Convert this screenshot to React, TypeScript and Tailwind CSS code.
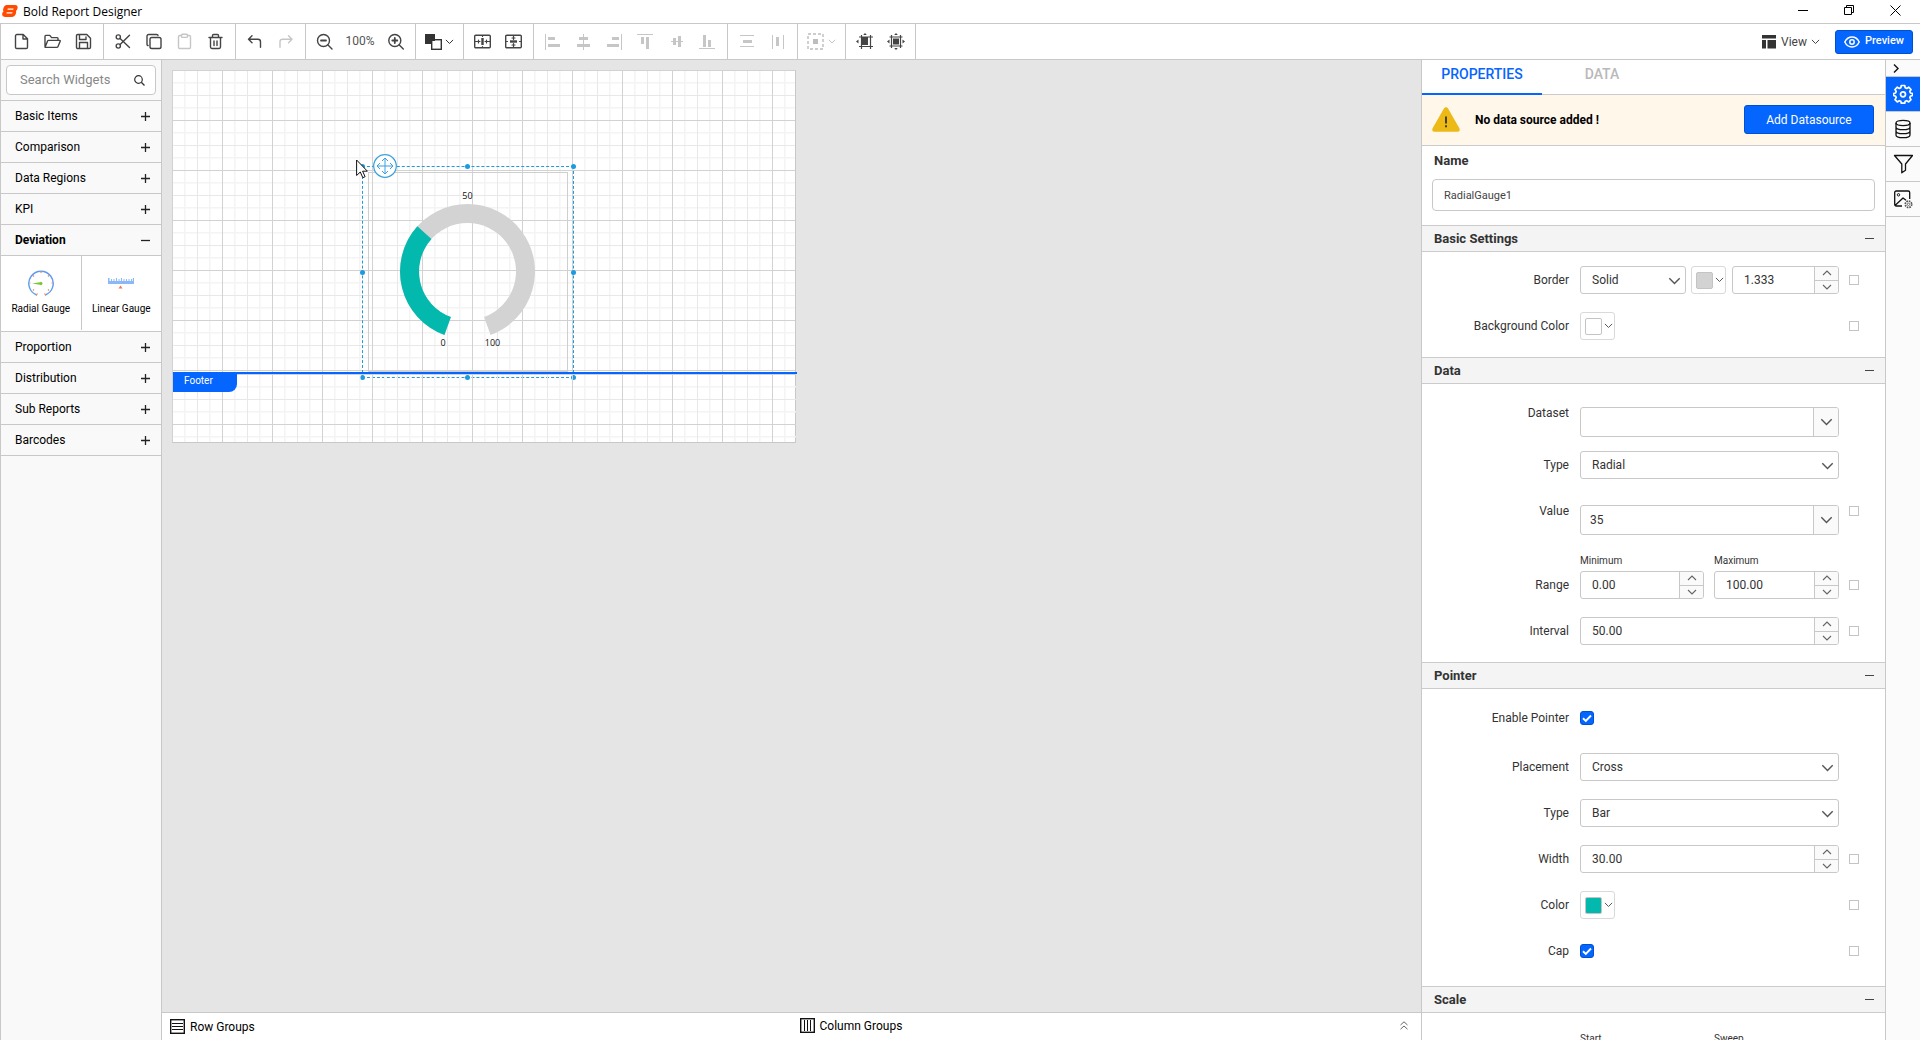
import React, { useId, useState } from 'react';

type IconProps = { children: React.ReactNode; size?: number; className?: string };

function Icon({ children, size = 17, className = '' }: IconProps) {
  return (
    <svg
      width={size}
      height={size}
      viewBox={`0 0 ${size} ${size}`}
      fill="none"
      stroke="currentColor"
      strokeWidth="1.4"
      strokeLinecap="round"
      strokeLinejoin="round"
      className={className}
      aria-hidden="true"
    >
      {children}
    </svg>
  );
}

function Chevron({ up = false, className = 'w-[9px]' }: { up?: boolean; className?: string }) {
  return (
    <svg viewBox="0 0 10 6" fill="none" stroke="currentColor" className={className} aria-hidden="true">
      <path d={up ? 'M1 5l4-4 4 4' : 'M1 1l4 4 4-4'} strokeWidth="1.1" />
    </svg>
  );
}

/* ---------- Toolbar ---------- */

const icons = {
  file: (
    <path d="M3.8 1.5h6.4l4.3 4.3v8.4c0 .8-.6 1.3-1.3 1.3H3.8c-.7 0-1.3-.5-1.3-1.3V2.8c0-.7.6-1.3 1.3-1.3zM10 1.8v4.2h4.3" />
  ),
  open: (
    <path d="M1 13.5V3.2c0-.5.3-.8.8-.8h4l1.8 2.2h5.6c.5 0 .8.3.8.8v2M1 14.2L3.6 8c.2-.4.5-.6.9-.6h11.2c.5 0 .7.4.5.8l-2.3 5.5c-.2.5-.5.7-1 .7H1.6" />
  ),
  save: (
    <path d="M2.8 1.5h9l3.7 3.7v9c0 .8-.5 1.3-1.3 1.3H2.8c-.8 0-1.3-.5-1.3-1.3V2.8c0-.8.5-1.3 1.3-1.3zM4.5 1.8v4.7h6.5V4M4.5 15.2V9.5h8v5.7" />
  ),
  cut: (
    <>
      <circle cx="4.3" cy="4" r="2.1" />
      <circle cx="4.3" cy="13" r="2.1" />
      <path d="M6.1 5.400L15.500 14.600M6.100 11.600L15.500 2.200" />
    </>
  ),
  copy: (
    <>
      <rect x="5" y="4.5" width="11" height="11" rx="1.8" />
      <path d="M3.1 12.5C2.5 12.5 2 12 2 11.3V3.2c0-1 .7-1.7 1.7-1.7h8c.7 0 1.3.5 1.3 1.1" />
    </>
  ),
  paste: (
    <>
      <path d="M5.5 2.5H3.7c-.7 0-1.2.5-1.2 1.2v10.6c0 .7.5 1.2 1.2 1.2h9.6c.7 0 1.2-.5 1.2-1.2V3.7c0-.7-.5-1.2-1.2-1.2h-1.8" />
      <rect x="5.5" y="1.2" width="6" height="3.2" rx="1" />
    </>
  ),
  trash: (
    <path d="M2 4.5h13M3.5 4.5v9.6c0 .8.6 1.4 1.4 1.4h7.2c.8 0 1.4-.6 1.4-1.4V4.5M5.5 4.3V2.6c0-.6.5-1.1 1.1-1.1h3.8c.6 0 1.1.5 1.1 1.1v1.7M7 8v4.5M10 8v4.5" />
  ),
  undo: <path d="M6 2.8L2.5 6.3 6 9.800M2.700 6.300H12c1.600 0 2.500 1 2.500 2.600v5.300" />,
  redo: <path d="M11.5 2.8L15 6.3l-3.5 3.5M14.8 6.3H5.5C3.9 6.3 3 7.3 3 8.9v5.3" />,
  zoomOut: (
    <>
      <circle cx="7.5" cy="7.5" r="6" />
      <path d="M12 12l4 4" />
      <path d="M5 7.5h5" strokeWidth="1.8" />
    </>
  ),
  zoomIn: (
    <>
      <circle cx="7.800" cy="7.5" r="6" />
      <path d="M12.300 12l4 4" />
      <path d="M5.300 7.5h5M7.800 5v5" strokeWidth="1.8" />
    </>
  ),
  fitWidth: (
    <>
      <rect x="0.7" y="2.2" width="15.6" height="12.6" rx="1" />
      <path d="M8.5 5v7" strokeWidth="2.4" strokeLinecap="butt" />
      <path d="M8.5 2.5v1M8.5 13.5v1M1 8.5h5M11 8.5h5M4.5 7v3M12.5 7v3" strokeWidth="1.2" />
    </>
  ),
  fitHeight: (
    <>
      <rect x="0.7" y="2.2" width="15.6" height="12.6" rx="1" />
      <path d="M5 8.5h7" strokeWidth="2.4" strokeLinecap="butt" />
      <path d="M8.5 2.5v4M8.5 10.5v4M7 5h3M7 12h3M1.5 8.5h1M14.5 8.5h1" strokeWidth="1.2" />
    </>
  ),
  alignLeft: (
    <g fill="currentColor" stroke="none">
      <rect x="1" y="1" width="1" height="16" />
      <rect x="4" y="4" width="7" height="3" />
      <rect x="4" y="11" width="12" height="3" />
    </g>
  ),
  alignCenter: (
    <g fill="currentColor" stroke="none">
      <rect x="8" y="1" width="1" height="16" />
      <rect x="4" y="4" width="9" height="3" />
      <rect x="2" y="11" width="13" height="3" />
    </g>
  ),
  alignRight: (
    <g fill="currentColor" stroke="none">
      <rect x="15" y="1" width="1" height="16" />
      <rect x="6" y="4" width="7" height="3" />
      <rect x="1" y="11" width="12" height="3" />
    </g>
  ),
  alignTop: (
    <g fill="currentColor" stroke="none">
      <rect x="0" y="1" width="16" height="1" />
      <rect x="4" y="4" width="3" height="7" />
      <rect x="9" y="4" width="3" height="12" />
    </g>
  ),
  alignMiddle: (
    <g fill="currentColor" stroke="none">
      <rect x="3" y="8" width="12" height="1" />
      <rect x="5" y="5" width="3" height="7" />
      <rect x="10" y="3" width="3" height="11" />
    </g>
  ),
  alignBottom: (
    <g fill="currentColor" stroke="none">
      <rect x="0" y="15" width="16" height="1" />
      <rect x="4" y="2" width="3" height="12" />
      <rect x="9" y="7" width="3" height="7" />
    </g>
  ),
  spaceVertical: (
    <g fill="currentColor" stroke="none">
      <rect x="2" y="2" width="14" height="1" />
      <rect x="5" y="7" width="9" height="3" />
      <rect x="2" y="13" width="14" height="1" />
    </g>
  ),
  spaceHorizontal: (
    <g fill="currentColor" stroke="none">
      <rect x="3" y="2" width="1" height="14" />
      <rect x="7" y="4" width="3" height="9" />
      <rect x="14" y="2" width="1" height="14" />
    </g>
  ),
  crop: (
    <>
      <path d="M5.500 2v14M14.500 2v14M3 4h14M3 13.500h14" strokeWidth="1.200" strokeLinecap="butt" />
      <rect x="5" y="4" width="7" height="8" fill="currentColor" stroke="none" />
      <path d="M0 8.500l2.500-2v4zM9 0l1.800 2H7.200z" fill="currentColor" stroke="none" />
    </>
  ),
  cropAll: (
    <>
      <path d="M4.500 2v13M13.500 2v13M2.500 4h13M2.500 13h13" strokeWidth="1.200" strokeLinecap="butt" />
      <rect x="6" y="5.500" width="6" height="6" fill="currentColor" stroke="none" />
      <path
        d="M0 8.500l2.500-2v4zM18 8.500l-2.500-2v4zM9 0l1.800 2H7.200zM9 17l1.800-2H7.200z"
        fill="currentColor"
        stroke="none"
      />
    </>
  ),
};

type IconName = keyof typeof icons;

function Tool({ icon, label, disabled = false }: { icon: IconName; label: string; disabled?: boolean }) {
  return (
    <button
      type="button"
      aria-label={label}
      disabled={disabled}
      className="flex h-[35px] w-[31px] items-center justify-center text-[#444] disabled:text-[#c6c6c6]"
    >
      <Icon className="overflow-visible">{icons[icon]}</Icon>
    </button>
  );
}

function Group({ children, first = false }: { children: React.ReactNode; first?: boolean }) {
  return (
    <div className={`flex items-center border-r border-[#c8c8c8] pr-1 ${first ? 'pl-[5px]' : 'pl-[3px]'}`}>
      {children}
    </div>
  );
}

function Toolbar() {
  return (
    <div className="flex h-[37px] shrink-0 border border-r-0 border-[#c8c8c8] bg-white">
      <Group first>
        <Tool icon="file" label="New" />
        <Tool icon="open" label="Open" />
        <Tool icon="save" label="Save" />
      </Group>
      <Group>
        <Tool icon="cut" label="Cut" />
        <Tool icon="copy" label="Copy" />
        <Tool icon="paste" label="Paste" disabled />
        <Tool icon="trash" label="Delete" />
      </Group>
      <Group>
        <Tool icon="undo" label="Undo" />
        <Tool icon="redo" label="Redo" disabled />
      </Group>
      <Group>
        <Tool icon="zoomOut" label="Zoom out" />
        <span className="w-10 pb-[2px] text-center text-[12px] text-[#555]">100%</span>
        <Tool icon="zoomIn" label="Zoom in" />
      </Group>
      <Group>
        <button type="button" aria-label="Order" className="flex h-[35px] w-10 items-center justify-center text-[#333]">
          <Icon className="shrink-0">
            <rect x="0" y="1" width="10" height="10" fill="currentColor" stroke="none" />
            <rect x="6.7" y="6.7" width="9.6" height="9.6" fill="#fff" strokeLinejoin="miter" />
            <rect x="0" y="1" width="10" height="7" fill="currentColor" stroke="none" />
          </Icon>
          <Chevron className="ml-[3px] w-[9px]" />
        </button>
      </Group>
      <Group>
        <Tool icon="fitWidth" label="Fit width" />
        <Tool icon="fitHeight" label="Fit height" />
      </Group>
      <Group>
        <Tool icon="alignLeft" label="Align left" disabled />
        <Tool icon="alignCenter" label="Align center" disabled />
        <Tool icon="alignRight" label="Align right" disabled />
        <Tool icon="alignTop" label="Align top" disabled />
        <Tool icon="alignMiddle" label="Align middle" disabled />
        <Tool icon="alignBottom" label="Align bottom" disabled />
      </Group>
      <Group>
        <Tool icon="spaceVertical" label="Space vertically" disabled />
        <Tool icon="spaceHorizontal" label="Space horizontally" disabled />
      </Group>
      <Group>
        <button
          type="button"
          disabled
          aria-label="Grid alignment"
          className="flex h-[35px] w-10 items-center justify-center text-[#bdbdbd]"
        >
          <Icon className="shrink-0">
            <rect x="1" y="1" width="15" height="15" strokeDasharray="3 2" strokeLinecap="butt" />
            <rect x="6" y="6" width="5" height="5" fill="currentColor" stroke="none" />
          </Icon>
          <Chevron className="ml-1 w-[8px]" />
        </button>
      </Group>
      <Group>
        <Tool icon="crop" label="Center in parent" />
        <Tool icon="cropAll" label="Fit to parent" />
      </Group>
      <div className="ml-auto flex items-center pr-[7px]">
        <button type="button" className="flex items-center text-[12px] text-[#444]">
          <svg width="14" height="14" viewBox="0 0 14 14" fill="#333" className="mr-[5px]" aria-hidden="true">
            <path d="M0 0h14v3.500H0zM0 5h4v8.500H0zM5.500 5H14v8.500H5.500z" />
          </svg>
          View
          <Chevron className="ml-1 w-[9px]" />
        </button>
        <button
          type="button"
          className="ml-[15px] flex h-6 w-[78px] items-center justify-center gap-[5px] rounded-[3px] border border-[#0050d0] bg-[#0565ff] text-[11px] font-medium text-white"
        >
          <svg width="16" height="12" viewBox="0 0 16 12" fill="none" stroke="currentColor" aria-hidden="true">
            <path d="M.8 6C2.300 2.900 4.900 1 8 1s5.700 1.900 7.200 5c-1.500 3.100-4.100 5-7.200 5S2.300 9.100.8 6z" strokeWidth="1.5" />
            <circle cx="8" cy="6" r="2.200" strokeWidth="1.5" />
          </svg>
          Preview
        </button>
      </div>
    </div>
  );
}

function TitleBar() {
  return (
    <header className="flex h-[23px] shrink-0 items-start bg-white pl-[2px] pr-[19px]">
      <svg width="16" height="12" viewBox="0 0 16 12" className="mt-[5px]" aria-hidden="true">
        <path
          d="M5 0h8c2 0 3 1.200 2.500 3.200-.3 1.300-.6 1.900-1.500 2.700.3.700.2 1.500-.1 2.600C13.200 10.700 12 12 9.500 12h-6C1.200 12-.1 10.700.2 8.700c.2-1 .5-1.600 1.300-2.300C1 5.700 1 5 1.200 4 1.800 1.300 3 0 5 0z"
          fill="#ff4a00"
        />
        <path d="M5.800 3.500h5.800l-.4 1.300H5.400zM4.800 7.300h5.800l-.4 1.300H4.400z" fill="#fff" />
      </svg>
      <h1 className="ml-[5px] font-['Open_Sans',sans-serif] text-[12px] leading-[23px] text-black">Bold Report Designer</h1>
      <div className="ml-auto flex h-[20px] items-center gap-9 text-black">
        <button type="button" aria-label="Minimize">
          <svg width="10" height="10" viewBox="0 0 10 10" fill="none" stroke="currentColor" aria-hidden="true">
            <path d="M0 5.500h10" />
          </svg>
        </button>
        <button type="button" aria-label="Restore">
          <svg width="10" height="10" viewBox="0 0 10 10" fill="none" stroke="currentColor" aria-hidden="true">
            <path d="M.5 2.500h7v7h-7zM2.500 2V.5h7v7H8" />
          </svg>
        </button>
        <button type="button" aria-label="Close">
          <svg width="11" height="11" viewBox="0 0 11 11" fill="none" stroke="currentColor" aria-hidden="true">
            <path d="M.5.5l10 10M10.500.5l-10 10" />
          </svg>
        </button>
      </div>
    </header>
  );
}

/* ---------- Widget list ---------- */

function Category({ name, open = false }: { name: string; open?: boolean }) {
  return (
    <button
      type="button"
      aria-expanded={open}
      className={`flex h-[31px] w-full items-center justify-between border-b border-[#c8c8c8] pl-[14px] pr-[11px] text-[12px] text-black ${open ? 'font-bold' : ''}`}
    >
      {name}
      <svg width="9" height="9" viewBox="0 0 9 9" fill="none" stroke="#222" aria-hidden="true">
        <path d={open ? 'M0 4.500h9' : 'M0 4.500h9M4.500 0v9'} strokeWidth="1.300" />
      </svg>
    </button>
  );
}

function Sidebar() {
  return (
    <aside className="flex w-[162px] shrink-0 flex-col border-x border-[#c8c8c8] bg-[#f9f9f9]">
      <div className="border-b border-[#c8c8c8] px-[5px] pb-[5px] pt-[5px]">
        <label className="flex h-[30px] items-center rounded-[4px] border border-[#c8c8c8] bg-white pl-[13px] pr-[10px]">
          <input
            type="text"
            aria-label="Search Widgets"
            placeholder="Search Widgets"
            className="min-w-0 flex-1 text-[13px] text-[#333] outline-none placeholder:text-[#888]"
          />
          <svg width="11" height="11" viewBox="0 0 11 11" fill="none" stroke="#333" aria-hidden="true">
            <circle cx="4.500" cy="4.500" r="3.800" strokeWidth="1.200" />
            <path d="M7.300 7.300l3.200 3.200" strokeWidth="1.300" />
          </svg>
        </label>
      </div>
      <Category name="Basic Items" />
      <Category name="Comparison" />
      <Category name="Data Regions" />
      <Category name="KPI" />
      <Category name="Deviation" open />
      <div className="flex border-b border-[#c8c8c8] bg-white">
        <button
          type="button"
          className="mb-px flex h-[74px] flex-1 flex-col items-center border-r border-[#c8c8c8] pt-[14px] text-[10px] text-black"
        >
          <svg width="26" height="26" viewBox="0 0 26 26" fill="none" className="mb-[5px]" aria-hidden="true">
            <path d="M9 25A12.200 12.200 0 1 1 17 25" stroke="#5b9bf3" strokeWidth="1.400" />
            <path
              d="M13 3v-2M5 5.500l1 1M21 5.500l-1 1M2.500 13h-1M25 13h-1.500M5 20.500l1-1M21 20.500l-1-1M8 25.500l1.500-2M18 25.500l-1.500-2"
              stroke="#f08a5d"
              strokeWidth="1.200"
            />
            <path d="M4 13.500l8-1.300a1.600 1.600 0 1 1 0 2.600z" fill="#7dc62f" />
          </svg>
          Radial Gauge
        </button>
        <button type="button" className="flex h-[74px] flex-1 flex-col items-center pt-[14px] text-[10px] text-black">
          <svg width="26" height="26" viewBox="0 0 26 26" className="mb-[5px]" aria-hidden="true">
            <path
              d="M0 8h1.500v3H3V9h1v2h1.500V9h1v2H8V8h1v3h1.500V9h1v2H13V8h1v3h1.500V9h1v2H18V9h1v2h1.500V9h1v2H23V9h1v2h.8V8H26v6H0z"
              fill="#8bb8f7"
            />
            <path d="M12.500 15.500l2 3h-4z" fill="#f0784a" />
          </svg>
          Linear Gauge
        </button>
      </div>
      <Category name="Proportion" />
      <Category name="Distribution" />
      <Category name="Sub Reports" />
      <Category name="Barcodes" />
    </aside>
  );
}

/* ---------- Design surface ---------- */

function Grid({ id }: { id: string }) {
  return (
    <svg className="absolute inset-0 h-full w-full" aria-hidden="true">
      <defs>
        <pattern id={id} width="50" height="50" patternUnits="userSpaceOnUse">
          <path d="M12 0h1.500v50H12zM37 0h1.500v50H37zM0 12h50v1.500H0zM0 37h50v1.500H0z" fill="#f4f4f4" />
          <path d="M25 0h1v50h-1zM0 25h50v1H0z" fill="#e8e8e8" />
          <path d="M0 0h1v50H0zM0 0h50v1H0z" fill="#d2d2d2" />
        </pattern>
      </defs>
      <rect width="100%" height="100%" fill={`url(#${id})`} />
    </svg>
  );
}

function arc(from: number, to: number, outer: number, inner: number) {
  const c = 98.5;
  const p = (r: number, deg: number) => {
    const a = (deg * Math.PI) / 180;
    return `${(c + r * Math.cos(a)).toFixed(2)} ${(c + r * Math.sin(a)).toFixed(2)}`;
  };
  const large = to - from > 180 ? 1 : 0;
  return `M${p(outer, from)}A${outer} ${outer} 0 ${large} 1 ${p(outer, to)}L${p(inner, to)}A${inner} ${inner} 0 ${large} 0 ${p(inner, from)}Z`;
}

function RadialGauge() {
  return (
    <svg width="198" height="198" viewBox="0 0 198 198" aria-label="Radial gauge">
      <path d={arc(110, 430, 67.5, 48.5)} fill="#d3d3d3" />
      <path d={arc(110, 222, 67.5, 48.5)} fill="#03b9ad" />
      <g fontFamily="Open Sans, sans-serif" fontSize="9" fill="#111" textAnchor="middle">
        <text x="98.500" y="26">50</text>
        <text x="74" y="173">0</text>
        <text x="123.500" y="173">100</text>
      </g>
    </svg>
  );
}

function Handle({ className }: { className: string }) {
  return <span className={`absolute h-[5px] w-[5px] rounded-full bg-[#1c9be0] ${className}`} />;
}

function Selection() {
  return (
    <div className="absolute left-[189px] top-[95px] h-[212px] w-[212px] border border-dashed border-[#1c9be0] p-[5px]">
      <div className="h-[200px] border border-[#cfcfcf]">
        <RadialGauge />
      </div>
      <Handle className="-left-[3px] -top-[3px]" />
      <Handle className="-top-[3px] left-[102px]" />
      <Handle className="-right-[3px] -top-[3px]" />
      <Handle className="-left-[3px] top-[103px]" />
      <Handle className="-right-[3px] top-[103px]" />
      <Handle className="-bottom-[3px] -left-[3px]" />
      <Handle className="-bottom-[3px] left-[102px]" />
      <Handle className="-bottom-[3px] -right-[3px]" />
      <svg
        width="24"
        height="24"
        viewBox="0 0 24 24"
        fill="none"
        stroke="#3ba0de"
        className="absolute -top-[13px] left-[10px]"
        aria-hidden="true"
      >
        <circle cx="12" cy="12" r="11.300" fill="#fff" strokeWidth="1.200" />
        <path d="M12 4v16M4 12h16M9 7l3-3 3 3M9 17l3 3 3-3M7 9l-3 3 3 3M17 9l3 3-3 3" />
      </svg>
      <svg width="12" height="20" viewBox="0 0 12 20" className="absolute -left-[7px] -top-[8px]" aria-hidden="true">
        <path d="M.6 1v15.500l3.700-3.500 2.500 5.700 2.300-1-2.500-5.500h4.800z" fill="#fff" stroke="#111" />
      </svg>
    </div>
  );
}

function GroupIcon({ columns = false }: { columns?: boolean }) {
  return (
    <svg width="15" height="15" viewBox="0 0 15 15" fill="none" stroke="#111" aria-hidden="true">
      <rect x=".7" y=".7" width="13.600" height="13.600" strokeWidth="1.400" />
      <path d={columns ? 'M4.500 2v11M7.500 2v11M10.500 2v11' : 'M2 4.500h11M2 7.500h11M2 10.500h11'} />
    </svg>
  );
}

function Designer() {
  return (
    <main className="flex min-w-0 flex-1 flex-col bg-[#e5e5e5]">
      <div className="flex-1 overflow-hidden pl-[10px] pt-[10px]">
        <div className="relative w-[624px] border border-[#c8c8c8] bg-white">
          <section className="relative -ml-px -mt-px h-[302px]">
            <Grid id="body-grid" />
          </section>
          <section className="relative z-10 -mr-[2px] border-t-2 border-[#0565ff]">
            <div className="relative -ml-px mr-px h-[68px]">
              <Grid id="footer-grid" />
              <span className="relative ml-px flex h-[18px] w-[64px] items-center rounded-br-[8px] bg-[#0565ff] pb-[5px] pl-[11px] text-[10px] text-white">
                Footer
              </span>
            </div>
          </section>
          <Selection />
        </div>
      </div>
      <footer className="grid h-7 shrink-0 grid-cols-2 border-t border-[#c8c8c8] bg-white text-[12px] text-black">
        <div className="flex items-center gap-[5px] pl-2">
          <GroupIcon />
          Row Groups
        </div>
        <div className="flex items-center gap-[5px] pb-[2px] pl-2">
          <GroupIcon columns />
          Column Groups
          <button type="button" aria-label="Expand groups" className="ml-auto mr-[13px]">
            <svg width="8" height="9" viewBox="0 0 8 9" fill="none" stroke="#666" aria-hidden="true">
              <path d="M.5 4L4 .8 7.500 4M.5 8.200L4 5l3.500 3.200" />
            </svg>
          </button>
        </div>
      </footer>
    </main>
  );
}

/* ---------- Property panel ---------- */

function Section({ title, className, children }: { title: string; className: string; children: React.ReactNode }) {
  return (
    <section>
      <h2 className="border-y border-[#cbcbcb] bg-[#f4f4f4]">
        <button
          type="button"
          aria-expanded="true"
          className="flex h-[25px] w-full items-center justify-between pl-3 pr-[11px] text-[13px] font-bold text-[#333]"
        >
          {title}
          <span className="h-px w-[9px] bg-[#444]" />
        </button>
      </h2>
      <div className={className}>{children}</div>
    </section>
  );
}

type RowProps = {
  label: string;
  htmlFor?: string;
  advanced?: boolean;
  top?: boolean;
  children: React.ReactNode;
};

function Row({ label, htmlFor, advanced = true, top = false, children }: RowProps) {
  return (
    <div className={`flex ${top ? 'items-start' : 'items-center'}`}>
      <label
        htmlFor={htmlFor}
        className={`mr-[11px] w-[147px] shrink-0 text-right text-[12px] text-[#333] ${top ? 'leading-[12px]' : ''}`}
      >
        {label}
      </label>
      <div className="flex min-h-[28px] min-w-0 flex-1 items-center">{children}</div>
      <div className="ml-[10px] mr-[26px] flex w-[10px] shrink-0">
        {advanced && (
          <button
            type="button"
            aria-label={`${label} expression`}
            className={`h-[10px] w-[10px] border border-[#c4c4c4] bg-white ${top ? 'mt-px' : ''}`}
          />
        )}
      </div>
    </div>
  );
}

function Select({ id, value, className = 'flex-1' }: { id: string; value: string; className?: string }) {
  return (
    <div className={`relative ${className}`}>
      <select
        id={id}
        className="block h-[28px] w-full appearance-none rounded-[3px] border border-[#c8c8c8] bg-white pl-[11px] text-[12px] text-[#333]"
      >
        <option>{value}</option>
      </select>
      <Chevron className="pointer-events-none absolute right-[5px] top-[11px] w-[13px] text-[#555]" />
    </div>
  );
}

function Combo({ id, value }: { id: string; value: string }) {
  return (
    <div className="flex h-[30px] min-w-0 flex-1 overflow-hidden rounded-[3px] border border-[#c8c8c8] bg-white">
      <input id={id} type="text" defaultValue={value} className="min-w-0 flex-1 pl-[9px] text-[12px] text-[#333] outline-none" />
      <button
        type="button"
        aria-label="Open list"
        className="flex w-[25px] items-center justify-center border-l border-[#c8c8c8] bg-[#fafafa] text-[#555]"
      >
        <Chevron className="w-[13px]" />
      </button>
    </div>
  );
}

function Spinner({ id, label, value, className = 'flex-1' }: { id: string; label?: string; value: string; className?: string }) {
  return (
    <div className={`flex h-[28px] min-w-0 overflow-hidden rounded-[3px] border border-[#c8c8c8] bg-white ${className}`}>
      <input
        id={id}
        aria-label={label}
        type="text"
        inputMode="decimal"
        defaultValue={value}
        className="min-w-0 flex-1 pl-[11px] text-[12px] text-[#333] outline-none"
      />
      <div className="flex w-[24px] shrink-0 flex-col border-l border-[#c8c8c8] bg-[#fafafa] text-[#666]">
        <button type="button" aria-label="Increase" className="flex flex-1 items-center justify-center">
          <Chevron up className="w-[10px]" />
        </button>
        <button type="button" aria-label="Decrease" className="flex flex-1 items-center justify-center border-t border-[#c8c8c8]">
          <Chevron className="w-[10px]" />
        </button>
      </div>
    </div>
  );
}

function ColorButton({ label, swatch }: { label: string; swatch: string }) {
  return (
    <button
      type="button"
      aria-label={label}
      className="flex h-[28px] w-[35px] shrink-0 items-center gap-[2px] rounded-[3px] border border-[#d9d9d9] bg-white pl-1 text-[#555]"
    >
      <span className={`h-[17px] w-[17px] rounded-[2px] border border-[#c4c4c4] ${swatch}`} />
      <Chevron className="w-[9px]" />
    </button>
  );
}

function Tick({ id }: { id: string }) {
  const [on, setOn] = useState(true);
  return (
    <span className="relative flex h-[14px] w-[14px]">
      <input
        id={id}
        type="checkbox"
        checked={on}
        onChange={() => setOn(!on)}
        className="h-[14px] w-[14px] appearance-none rounded-[3px] border border-[#0050d0] bg-white checked:bg-[#0565ff]"
      />
      {on && (
        <svg viewBox="0 0 14 14" fill="none" stroke="#fff" className="pointer-events-none absolute inset-0" aria-hidden="true">
          <path d="M3 7.300l2.800 2.700L11 4.500" strokeWidth="1.900" />
        </svg>
      )}
    </span>
  );
}

function Caption({ text, htmlFor, className }: { text: string; htmlFor: string; className: string }) {
  return (
    <label htmlFor={htmlFor} className={`block text-[10px] leading-4 text-[#333] ${className}`}>
      {text}
    </label>
  );
}

function Properties() {
  const uid = useId();
  const id = (name: string) => `${uid}-${name}`;
  return (
    <aside className="w-[465px] shrink-0 overflow-hidden border-x border-[#c8c8c8] bg-white">
      <div role="tablist" className="flex h-[35px] border-b border-[#cbcbcb] text-[14px] font-medium">
        <button
          type="button"
          role="tab"
          aria-selected="true"
          className="h-[35px] w-[120px] border-b-2 border-[#0565ff] pb-[4px] text-[#0565ff]"
        >
          PROPERTIES
        </button>
        <button type="button" role="tab" aria-selected="false" className="h-[35px] w-[120px] pb-[6px] text-[#b9b9b9]">
          DATA
        </button>
      </div>
      <div className="flex h-[51px] items-center border-b border-[#cbcbcb] bg-[#fff7ea] pb-px pl-[10px] pr-[11px]">
        <svg width="28" height="25" viewBox="0 0 28 25" aria-hidden="true">
          <path d="M14 .3c.9 0 1.600.5 2.200 1.500l11.200 19.500c.8 1.600.2 3.400-1.800 3.400H2.400c-2 0-2.600-1.800-1.800-3.400L11.800 1.800C12.400.8 13.100.3 14 .3z" fill="#ecb916" />
          <path d="M14 9.500v7M14 18.200v2" stroke="#222" strokeWidth="1.600" />
        </svg>
        <span className="ml-[15px] text-[12px] font-bold text-black">No data source added !</span>
        <button
          type="button"
          className="ml-auto h-[29px] w-[130px] rounded-[3px] border border-[#0050d0] bg-[#0565ff] text-[12px] text-white"
        >
          Add Datasource
        </button>
      </div>
      <div className="px-[10px] pb-[14px] pt-[5px]">
        <label htmlFor={id('name')} className="ml-[2px] block text-[13px] font-bold leading-5 text-[#333]">
          Name
        </label>
        <input
          id={id('name')}
          type="text"
          defaultValue="RadialGauge1"
          className="mt-2 block h-[32px] w-full rounded-[4px] border border-[#c8c8c8] px-[11px] text-[11px] text-[#444] outline-none"
        />
      </div>

      <Section title="Basic Settings" className="flex flex-col gap-[18px] pb-[17px] pt-[14px]">
        <Row label="Border" htmlFor={id('border')}>
          <Select id={id('border')} value="Solid" className="w-[106px] shrink-0" />
          <div className="ml-[5px] mr-[6px]">
            <ColorButton label="Border color" swatch="bg-[#d3d3d3]" />
          </div>
          <Spinner id={id('border-width')} label="Border width" value="1.333" />
        </Row>
        <Row label="Background Color">
          <ColorButton label="Background color" swatch="bg-white" />
        </Row>
      </Section>

      <Section title="Data" className="pb-[17px] pt-[23px]">
        <Row label="Dataset" htmlFor={id('dataset')} advanced={false} top>
          <Combo id={id('dataset')} value="" />
        </Row>
        <div className="mb-[26px] mt-[14px]">
          <Row label="Type" htmlFor={id('type')} advanced={false}>
            <Select id={id('type')} value="Radial" />
          </Row>
        </div>
        <Row label="Value" htmlFor={id('value')} top>
          <Combo id={id('value')} value="35" />
        </Row>
        <div className="mb-[2px] mt-[18px] flex pl-[158px]">
          <Caption text="Minimum" htmlFor={id('min')} className="w-[134px]" />
          <Caption text="Maximum" htmlFor={id('max')} className="flex-1" />
        </div>
        <div className="flex flex-col gap-[18px]">
          <Row label="Range" htmlFor={id('min')}>
            <Spinner id={id('min')} value="0.00" className="mr-[10px] w-[124px] shrink-0" />
            <Spinner id={id('max')} value="100.00" />
          </Row>
          <Row label="Interval" htmlFor={id('interval')}>
            <Spinner id={id('interval')} value="50.00" />
          </Row>
        </div>
      </Section>

      <Section title="Pointer" className="pb-[21px] pt-[15px]">
        <Row label="Enable Pointer" htmlFor={id('enable')} advanced={false}>
          <Tick id={id('enable')} />
        </Row>
        <div className="mt-[21px] flex flex-col gap-[18px]">
          <Row label="Placement" htmlFor={id('placement')} advanced={false}>
            <Select id={id('placement')} value="Cross" />
          </Row>
          <Row label="Type" htmlFor={id('pointer-type')} advanced={false}>
            <Select id={id('pointer-type')} value="Bar" />
          </Row>
          <Row label="Width" htmlFor={id('width')}>
            <Spinner id={id('width')} value="30.00" />
          </Row>
          <Row label="Color">
            <ColorButton label="Pointer color" swatch="bg-[#03b9ad]" />
          </Row>
          <Row label="Cap" htmlFor={id('cap')}>
            <Tick id={id('cap')} />
          </Row>
        </div>
      </Section>

      <Section title="Scale" className="pt-[18px]">
        <div className="flex pl-[158px]">
          <Caption text="Start" htmlFor={id('start')} className="w-[134px]" />
          <Caption text="Sweep" htmlFor={id('sweep')} className="flex-1" />
        </div>
        <div className="mt-[2px]">
          <Row label="Angle" htmlFor={id('start')}>
            <Spinner id={id('start')} value="110.00" className="mr-[10px] w-[124px] shrink-0" />
            <Spinner id={id('sweep')} value="320.00" />
          </Row>
        </div>
      </Section>
    </aside>
  );
}

function RailButton({ label, active = false, children }: { label: string; active?: boolean; children: React.ReactNode }) {
  return (
    <button
      type="button"
      aria-label={label}
      className={`flex h-[35px] w-full items-center justify-center border-b border-[#c8c8c8] pb-px ${active ? 'bg-[#0565ff] text-white' : 'text-[#111]'}`}
    >
      <svg width="20" height="20" viewBox="0 0 20 20" fill="none" stroke="currentColor" strokeWidth="1.300" strokeLinejoin="round" aria-hidden="true">
        {children}
      </svg>
    </button>
  );
}

function Rail() {
  return (
    <nav aria-label="Panels" className="w-[34px] shrink-0 bg-[#fbfbfb]">
      <button type="button" aria-label="Collapse panel" className="flex h-[17px] w-full items-center border-b border-[#c8c8c8] pl-[7px]">
        <svg width="6" height="9" viewBox="0 0 6 9" fill="none" stroke="#111" strokeWidth="1.400" aria-hidden="true">
          <path d="M1 .5l4 4-4 4" />
        </svg>
      </button>
      <RailButton label="Properties" active>
        <path
          d="M8.300 1.500h3.400l.5 2.300 1.500.6 2-1.200 2.300 2.300-1.200 2 .6 1.500 2.100.5v1.900l-2.100.8-.6 1.400 1.200 2-2.300 2.300-2-1.200-1.500.6-.5 1.900H8.300l-.5-1.900-1.500-.6-2 1.200L2 15.600l1.200-2-.6-1.400-2-.8V9.500l2-.5.6-1.500-1.200-2L4.300 3.200l2 1.200 1.500-.6z"
          strokeWidth="1.700"
        />
        <circle cx="10" cy="10.300" r="2.500" strokeWidth="1.700" />
      </RailButton>
      <RailButton label="Data">
        <ellipse cx="10" cy="4" rx="7" ry="2.600" />
        <path d="M3 4v12c0 1.500 3.100 2.700 7 2.700s7-1.200 7-2.700V4M3 8c0 1.500 3.100 2.700 7 2.700S17 9.500 17 8M3 12c0 1.500 3.100 2.700 7 2.700s7-1.200 7-2.700" />
      </RailButton>
      <RailButton label="Filters">
        <path d="M1.500 1.500h18l-7 8.500v6.300L8.800 18.800V10z" />
      </RailButton>
      <RailButton label="Image settings">
        <path d="M9 17H3.200c-.9 0-1.500-.6-1.500-1.500v-12C1.700 2.600 2.300 2 3.200 2h12c.9 0 1.500.6 1.500 1.500V10M2 16.500l8-7.500 3 2.300" />
        <circle cx="5.500" cy="5.800" r="1.200" strokeWidth="1" />
        <circle cx="15.500" cy="15.300" r="3.200" strokeWidth="1.700" strokeDasharray="1.600 .9" stroke="#555" />
        <circle cx="15.500" cy="15.300" r="1.200" strokeWidth=".8" stroke="#555" />
      </RailButton>
    </nav>
  );
}

export default function App() {
  return (
    <div className="flex h-screen flex-col overflow-hidden bg-white font-[Roboto,sans-serif] leading-normal">
      <TitleBar />
      <Toolbar />
      <div className="flex min-h-0 flex-1">
        <Sidebar />
        <Designer />
        <Properties />
        <Rail />
      </div>
    </div>
  );
}
